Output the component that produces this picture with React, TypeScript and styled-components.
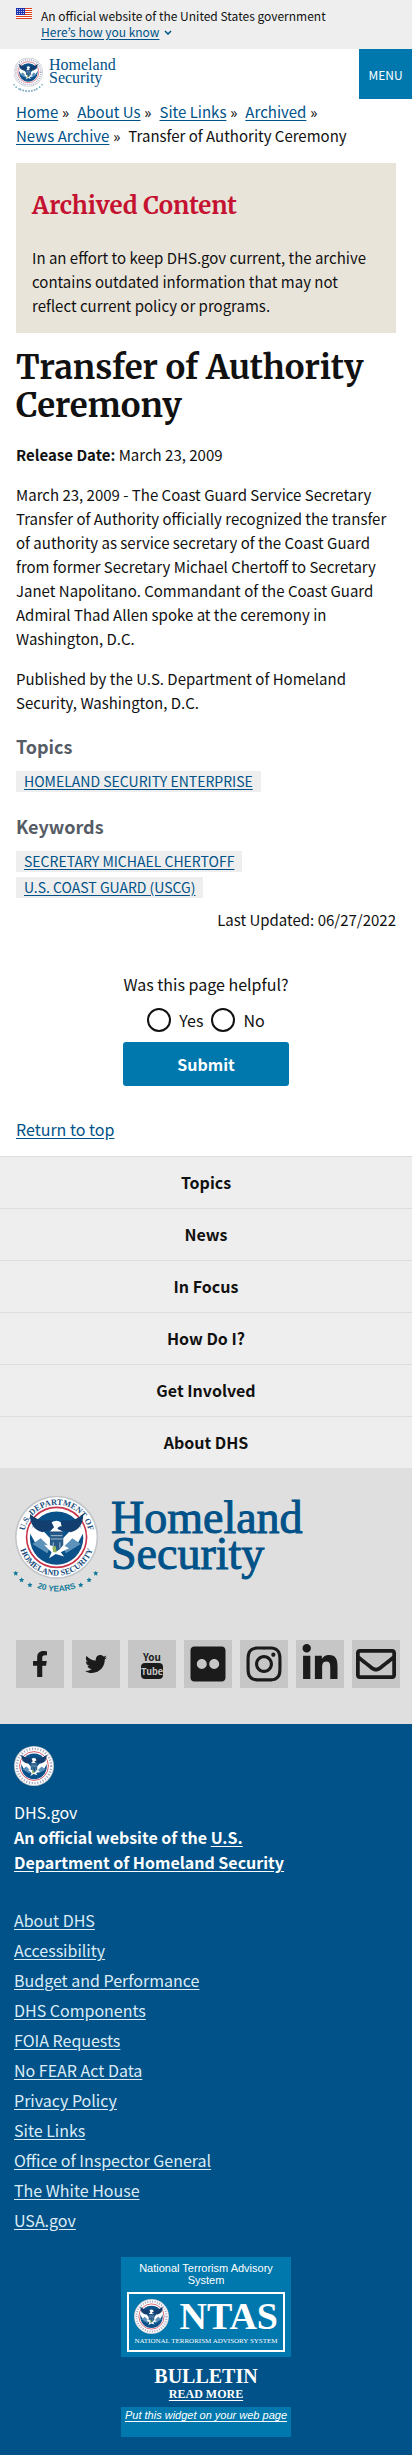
import React, { useId } from "react";
import styled, { createGlobalStyle } from "styled-components";
import {
  FaFacebookF,
  FaFlickr,
  FaInstagram,
  FaLinkedinIn,
  FaRegEnvelope,
  FaTwitter,
} from "react-icons/fa";

const sans = `"Source Sans Pro", "Noto Sans CJK JP", "Open Sans", sans-serif`;
const serif = `Merriweather, "DejaVu Serif Condensed", "DejaVu Serif", serif`;
const roman = `"Liberation Serif", serif`;

const color = {
  ink: "#1b1b1b",
  link: "#005288",
  blue: "#0078ae",
  navy: "#005288",
  pale: "#eeeeee",
  red: "#c41230",
};

const GlobalStyle = createGlobalStyle`
  *, *::before, *::after { box-sizing: border-box; }
  body { margin: 0; background: #fff; color: #111; font: 15px/24px ${sans}; }
  h1, h2, h3, p, ul, ol { margin: 0; padding: 0; }
  ul, ol { list-style: none; }
  a { color: ${color.link}; text-underline-offset: 2px; }
  button { font-family: inherit; border: 0; cursor: pointer; }
`;

/* ---------- Drawings ---------- */

type SealProps = { size: number; lettered?: boolean };

const stars: [number, number][] = [
  [1, 93], [8, 101], [18, 107], [79, 107], [89, 101], [97, 93],
];

function Seal({ size, lettered = false }: SealProps) {
  const id = useId();
  return (
    <svg width={size} height={size} viewBox="0 0 100 100" aria-hidden="true">
      <circle cx="50" cy="50" r="50" fill="#c3c7cb" />
      <circle cx="50" cy="50" r="48" fill="#fff" />
      {lettered ? (
        <g fill="#1b4f80" fontFamily={roman} fontWeight="700" fontSize="10" textAnchor="middle">
          <path id={`${id}t`} d="M11 50a39 39 0 0 1 78 0" fill="none" />
          <path id={`${id}b`} d="M4 50a46 46 0 0 0 92 0" fill="none" />
          <text><textPath href={`#${id}t`} startOffset="50%">U.S. DEPARTMENT OF</textPath></text>
          <text><textPath href={`#${id}b`} startOffset="50%">HOMELAND SECURITY</textPath></text>
        </g>
      ) : (
        <circle cx="50" cy="50" r="43" fill="none" stroke="#a3a9c2" strokeWidth="6" strokeDasharray="3 4" />
      )}
      <circle cx="50" cy="50" r="36" fill="#fff" stroke="#c8344a" strokeWidth="2" />
      <circle cx="50" cy="51" r="32" fill="#0b5189" />
      <path d="M17 43 L25 33 L48 57 L47 64 L24 56 Z M83 43 L75 33 L52 57 L53 64 L76 56 Z" fill="#fff" />
      <path d="M21 58 L31 51 L42 62 L39 69 Z M79 58 L69 51 L58 62 L61 69 Z" fill="#5d93ba" />
      <path d="M18 22 Q31 33 42 29 L46 32 L54 32 L58 29 Q69 33 82 22 Q82 40 67 44 L58 41 L57 57 L43 57 L42 41 L33 44 Q18 40 18 22Z" fill="#123f70" />
      <path d="M44 32 Q50 28 55 32 L56 37 Q52 36 51 40 L58 43 L42 43 L47 38 Z" fill="#fff" />
      <path d="M42 44H58V59Q54 66 50 67Q45 65 42 59Z" fill="#255a88" />
      <path d="M43 48H57M43 52H57M46 56V64M54 56V63" stroke="#bdd0df" strokeWidth="1" />
      <path d="M35 59 L45 60 L50 67 L59 60 L65 63 L55 68 L59 73 L49 70 L41 75 L44 68Z" fill="#fff" />
      <path d="M45 62 L49 60 L50 68 L46 68Z" fill="#91b55b" />
    </svg>
  );
}

function AnniversaryMark({ width, height, lettered = false }: { width: number; height: number; lettered?: boolean }) {
  const id = useId();
  return (
    <svg width={width} height={height} viewBox="-2 -2 105 120" aria-hidden="true">
      <Seal size={100} lettered={lettered} />
      <g fill="#167b9b">
        {stars.map(([x, y]) => (
          <path key={`${x}-${y}`} transform={`translate(${x} ${y})`} d="M0-3L1-1 3-1 1.5 1 2 3 0 2-2 3-1.5 1-3-1-1-1Z" />
        ))}
      </g>
      <path
        id={`${id}y`}
        d="M20 108Q50 122 80 108"
        fill="none"
        stroke={lettered ? "none" : "#7fa9c4"}
        strokeWidth="6"
        strokeDasharray="6 4"
      />
      {lettered && (
        <text fill="#167b9b" fontFamily={`"Liberation Sans", sans-serif`} fontWeight="700" fontSize="10" textAnchor="middle">
          <textPath href={`#${id}y`} startOffset="50%">20 YEARS</textPath>
        </text>
      )}
    </svg>
  );
}

function Flag() {
  return (
    <svg width="16" height="11" viewBox="0 0 16 11" aria-hidden="true">
      <rect width="16" height="11" fill="#fff" />
      <path d="M0 .5h16M0 2.5h16M0 4.5h16M0 6.5h16M0 8.5h16M0 10.5h16" stroke="#db3e1f" />
      <rect width="9" height="7" fill="#1e33b1" />
      <path d="M1 1.5h7M1 3.5h7M1 5.5h7" stroke="#fff" strokeDasharray="1 1" opacity=".7" />
    </svg>
  );
}

function YouTubeMark() {
  return (
    <svg width="24" height="30" viewBox="0 0 24 30" aria-hidden="true">
      <g fontFamily={sans} fontWeight="700" textAnchor="middle">
        <text x="12" y="12" fontSize="10" fill={color.ink}>You</text>
        <rect x="1" y="14" width="22" height="16" rx="4" fill={color.ink} />
        <text x="12" y="26" fontSize="9" fill="#c6c6c6">Tube</text>
      </g>
    </svg>
  );
}

/* ---------- Government banner and header ---------- */

const Banner = styled.section`
  display: flex;
  align-items: flex-start;
  gap: 9px;
  padding: 8px 16px 9px;
  background: ${color.pale};
  font-size: 12px;
  line-height: 16px;
`;

const BannerToggle = styled.button`
  display: flex;
  align-items: center;
  gap: 5px;
  padding: 0;
  background: none;
  color: ${color.link};
  font-size: 12px;
  line-height: 16px;
  span { text-decoration: underline; text-underline-offset: 2px; }
`;

const Header = styled.header`
  display: flex;
  justify-content: space-between;
  align-items: stretch;
  height: 50px;
`;

const Brand = styled.a`
  display: flex;
  align-items: flex-start;
  gap: 5px;
  padding: 8px 0 0 13px;
  text-decoration: none;
`;

const Wordmark = styled.span<{ $large?: boolean }>`
  margin-top: ${(p) => (p.$large ? 6 : 1)}px;
  font-family: ${roman};
  font-size: ${(p) => (p.$large ? 46 : 16)}px;
  line-height: ${(p) => (p.$large ? 36 : 13)}px;
  color: ${color.link};
  -webkit-text-stroke: ${(p) => (p.$large ? 1 : 0)}px ${color.link};
  span { display: block; }
`;

const MenuButton = styled.button`
  width: 53px;
  padding: 0;
  background: ${color.blue};
  color: #fff;
  font-size: 12px;
`;

/* ---------- Article ---------- */

const Main = styled.main`
  padding: 1px 16px 15px;
`;

const Crumbs = styled.ol`
  display: flex;
  flex-wrap: wrap;
  column-gap: 8px;
  li:not(:last-child)::after {
    content: "»";
    margin-left: 4px;
    font: 14px/14px "Open Sans", sans-serif;
  }
`;

const Notice = styled.section`
  margin-top: 15px;
  padding: 26px 16px 15px;
  background: #e9e4da;
  h2 { margin-bottom: 23px; color: ${color.red}; font: 700 24px/34px ${serif}; }
`;

const Title = styled.h1`
  margin: 16px 0 18px;
  font: 700 33px/38px ${serif};
`;

const Paragraph = styled.p`
  margin-bottom: 16px;
`;

const Subhead = styled.h2`
  margin: 18px 0 12px;
  color: #565c65;
  font-size: 18px;
  line-height: 26px;
  ul + & { margin-top: 21px; }
`;

const Tags = styled.ul`
  display: flex;
  flex-direction: column;
  align-items: flex-start;
  gap: 5px;
  a {
    display: block;
    padding: 0 8px;
    background: ${color.pale};
    font-size: 14px;
    line-height: 21px;
    text-transform: uppercase;
  }
`;

const Updated = styled.p`
  margin-top: 10px;
  text-align: right;
`;

const Feedback = styled.form`
  display: flex;
  flex-direction: column;
  align-items: center;
  margin-top: 40px;
  font-size: 16px;
`;

const Choices = styled.div`
  display: flex;
  gap: 8px;
  margin-top: 12px;
  label { display: flex; align-items: center; gap: 8px; }
  input { appearance: none; width: 24px; height: 24px; margin: 0; border: 2px solid #111; border-radius: 50%; background: #fff; }
`;

const Submit = styled.button`
  width: 166px;
  height: 44px;
  margin-top: 10px;
  border-radius: 3px;
  background: ${color.blue};
  color: #fff;
  font-size: 16px;
  font-weight: 700;
`;

const ReturnLink = styled.a`
  display: block;
  width: fit-content;
  margin-top: 31px;
  font-size: 16px;
`;

/* ---------- Footer ---------- */

const FooterNav = styled.nav`
  background: ${color.pale};
  a {
    display: block;
    border-top: 1px solid #dcdee0;
    color: #111;
    font-size: 16px;
    font-weight: 700;
    line-height: 51px;
    text-align: center;
    text-decoration: none;
  }
`;

const FooterBrand = styled.section`
  padding: 26px 12px 36px 16px;
  background: #dfdfdf;
  > a { display: flex; gap: 10px; text-decoration: none; }
`;

const BrandSeal = styled.span`
  display: flex;
  margin-left: -3px;
`;

const Social = styled.ul`
  display: flex;
  gap: 8px;
  margin-top: 46px;
  a { display: flex; align-items: center; justify-content: center; width: 48px; height: 48px; background: #c6c6c6; color: ${color.ink}; }
`;

const Identifier = styled.footer`
  padding: 22px 14px 18px;
  background: ${color.navy};
  color: #fff;
  font-size: 16px;
  line-height: 25px;
  > svg { display: block; margin-bottom: 14px; }
  a { color: inherit; }
`;

const IdentifierLinks = styled.ul`
  display: flex;
  flex-direction: column;
  gap: 5px;
  margin: 33px 0 24px;
  color: #dcecf7;
`;

const Widget = styled.aside`
  width: 170px;
  margin: 0 auto;
  font: 11px/12px "Liberation Sans", sans-serif;
  text-align: center;
`;

const WidgetTop = styled.div`
  padding: 5px 6px;
  background: ${color.blue};
`;

const NtasLogo = styled.div`
  margin-top: 6px;
  padding: 4px 5px;
  border: 2px solid #fff;
  font: 7px/9px ${roman};
  white-space: nowrap;
  div {
    display: flex;
    align-items: center;
    justify-content: space-between;
    margin-bottom: 2px;
    font: 700 38px/37px ${roman};
  }
  svg { flex-shrink: 0; }
  > span { display: flex; justify-content: center; }
`;

const Bulletin = styled.a`
  display: block;
  padding: 8px 0 6px;
  font: 700 20px/22px ${roman};
  text-decoration: none;
  span { display: block; font-size: 12px; line-height: 14px; text-decoration: underline; }
`;

const WidgetBottom = styled.div`
  height: 30px;
  padding-top: 2px;
  background: ${color.blue};
  font-style: italic;
  white-space: nowrap;
`;

const crumbs = ["Home", "About Us", "Site Links", "Archived", "News Archive"];
const sections = ["Topics", "News", "In Focus", "How Do I?", "Get Involved", "About DHS"];
const social = [
  { name: "Facebook", icon: <FaFacebookF size={26} /> },
  { name: "Twitter", icon: <FaTwitter size={22} /> },
  { name: "YouTube", icon: <YouTubeMark /> },
  { name: "Flickr", icon: <FaFlickr size={40} /> },
  { name: "Instagram", icon: <FaInstagram size={40} /> },
  { name: "LinkedIn", icon: <FaLinkedinIn size={40} /> },
  { name: "Email", icon: <FaRegEnvelope size={40} /> },
];
const required = [
  "About DHS", "Accessibility", "Budget and Performance", "DHS Components", "FOIA Requests",
  "No FEAR Act Data", "Privacy Policy", "Site Links", "Office of Inspector General",
  "The White House", "USA.gov",
];

export default function App() {
  return (
    <>
      <GlobalStyle />
      <Banner id="top">
        <Flag />
        <div>
          <p>An official website of the United States government</p>
          <BannerToggle type="button">
            <span>Here’s how you know</span>
            <svg width="8" height="5" viewBox="0 0 8 5" aria-hidden="true">
              <path d="M1 1l3 3 3-3" fill="none" stroke="currentColor" strokeWidth="1.5" />
            </svg>
          </BannerToggle>
        </div>
      </Banner>
      <Header>
        <Brand href="#home">
          <AnniversaryMark width={31} height={35} />
          <Wordmark><span>Homeland</span><span>Security</span></Wordmark>
        </Brand>
        <MenuButton type="button">MENU</MenuButton>
      </Header>
      <Main>
        <nav aria-label="Breadcrumb">
          <Crumbs>
            {crumbs.map((c) => <li key={c}><a href="#crumb">{c}</a></li>)}
            <li>Transfer of Authority Ceremony</li>
          </Crumbs>
        </nav>
        <Notice>
          <h2>Archived Content</h2>
          <p>In an effort to keep DHS.gov current, the archive contains outdated information that may not reflect current policy or programs.</p>
        </Notice>
        <Title>Transfer of Authority Ceremony</Title>
        <Paragraph><strong>Release Date:</strong> March 23, 2009</Paragraph>
        <Paragraph>
          March 23, 2009 - The Coast Guard Service Secretary Transfer of Authority officially recognized
          the transfer of authority as service secretary of the Coast Guard from former Secretary Michael
          Chertoff to Secretary Janet Napolitano. Commandant of the Coast Guard Admiral Thad Allen spoke
          at the ceremony in Washington, D.C.
        </Paragraph>
        <Paragraph>Published by the U.S. Department of Homeland Security, Washington, D.C.</Paragraph>
        <Subhead>Topics</Subhead>
        <Tags><li><a href="#enterprise">Homeland Security Enterprise</a></li></Tags>
        <Subhead>Keywords</Subhead>
        <Tags>
          <li><a href="#chertoff">Secretary Michael Chertoff</a></li>
          <li><a href="#uscg">U.S. Coast Guard (USCG)</a></li>
        </Tags>
        <Updated>Last Updated: 06/27/2022</Updated>
        <Feedback onSubmit={(e: React.FormEvent) => e.preventDefault()}>
          <p id="helpful-question">Was this page helpful?</p>
          <Choices role="radiogroup" aria-labelledby="helpful-question">
            <label><input type="radio" name="helpful" value="yes" />Yes</label>
            <label><input type="radio" name="helpful" value="no" />No</label>
          </Choices>
          <Submit type="submit">Submit</Submit>
        </Feedback>
        <ReturnLink href="#top">Return to top</ReturnLink>
      </Main>
      <FooterNav aria-label="Footer">
        {sections.map((s) => <a key={s} href="#section">{s}</a>)}
      </FooterNav>
      <FooterBrand>
        <a href="#home">
          <BrandSeal><AnniversaryMark width={88} height={100} lettered /></BrandSeal>
          <Wordmark $large><span>Homeland</span><span>Security</span></Wordmark>
        </a>
        <Social>
          {social.map(({ name, icon }) => (
            <li key={name}><a href="#social" aria-label={name}>{icon}</a></li>
          ))}
        </Social>
      </FooterBrand>
      <Identifier>
        <Seal size={40} />
        <p>DHS.gov</p>
        <p><strong>An official website of the <a href="#dhs">U.S.<br />Department of Homeland Security</a></strong></p>
        <IdentifierLinks>
          {required.map((r) => <li key={r}><a href="#required">{r}</a></li>)}
        </IdentifierLinks>
        <Widget>
          <WidgetTop>
            <p>National Terrorism Advisory System</p>
            <NtasLogo>
              <div><Seal size={35} />NTAS</div>
              <span>NATIONAL TERRORISM ADVISORY SYSTEM</span>
            </NtasLogo>
          </WidgetTop>
          <Bulletin href="#bulletin">BULLETIN<span>READ MORE</span></Bulletin>
          <WidgetBottom><a href="#widget">Put this widget on your web page</a></WidgetBottom>
        </Widget>
      </Identifier>
    </>
  );
}
